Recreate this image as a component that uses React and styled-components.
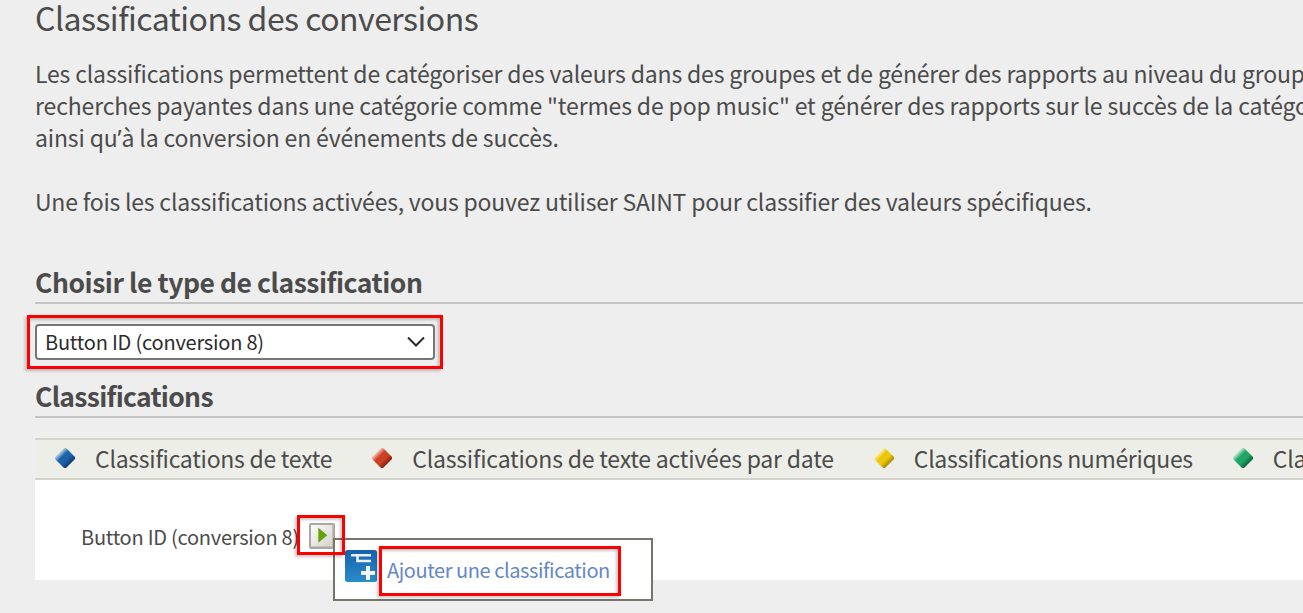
import React from "react";
import styled, { createGlobalStyle } from "styled-components";

const GlobalStyle = createGlobalStyle`
  * { box-sizing: border-box; }
  body {
    margin: 0;
    background: #eeeeee;
    color: #4b4b4b;
    font-family: "Noto Sans CJK SC", "Noto Sans", sans-serif;
    overflow: hidden;
  }
`;

const Page = styled.main`
  width: 1303px;
  height: 613px;
  padding-left: 35px;
  overflow: hidden;
  white-space: nowrap;
`;

const Title = styled.h1`
  margin: 0;
  font-size: 32px;
  font-weight: 400;
  line-height: 35px;
  letter-spacing: -0.52px;
`;

const Intro = styled.div`
  margin-top: 22px;
  font-size: 23px;
  line-height: 32px;
`;

const Line = styled.div`
  height: 32px;
  letter-spacing: ${(p) => p.$spacing || 0}px;
`;

const Apostrophe = styled.span`
  font-family: "Noto Sans", sans-serif;
`;

const SectionTitle = styled.h2`
  margin: ${(p) => p.$top}px 0 0;
  height: 40px;
  border-bottom: 2px solid #c4c4c4;
  font-size: 26.5px;
  font-weight: 700;
  line-height: 35px;
  letter-spacing: ${(p) => p.$spacing || 0}px;
`;

const Highlight = styled.span`
  position: absolute;
  inset: ${(p) => p.$inset};
  border: 3px solid #ff0000;
  box-shadow: -2px 2px 3px rgba(0, 0, 0, 0.22), inset -2px 2px 3px rgba(0, 0, 0, 0.22);
  pointer-events: none;
  z-index: 2;
`;

const Select = styled.div`
  position: relative;
  display: flex;
  align-items: center;
  justify-content: space-between;
  width: 400px;
  height: 36px;
  margin-top: 20px;
  padding: 0 8px;
  border: 2px solid #767676;
  border-radius: 4px;
  background: #fff;
  color: #2c2c2c;
  font-size: 20px;
  line-height: 32px;
  letter-spacing: -0.21px;
`;

const Legend = styled.div`
  display: flex;
  align-items: center;
  gap: 40px;
  height: 42px;
  margin-top: 20px;
  padding-left: 20px;
  border-top: 2px solid #d3d4cd;
  border-bottom: 2px solid #d3d4cd;
  background: #eeeee8;
`;

const LegendItem = styled.div`
  display: flex;
  flex: none;
  align-items: center;
  gap: 20px;
  height: 38px;
  padding-bottom: 2px;
  font-size: 23px;
  line-height: 36px;
  letter-spacing: ${(p) => p.$spacing || 0}px;
`;

const Panel = styled.div`
  display: flex;
  align-items: flex-start;
  height: 100px;
  padding: 43px 0 0 46px;
  background: #fff;
`;

const RowLabel = styled.span`
  width: 228px;
  font-size: 20px;
  line-height: 28px;
  letter-spacing: -0.25px;
`;

const ArrowButton = styled.div`
  position: relative;
  width: 26px;
  height: 26px;

  svg { display: block; }
`;

const Menu = styled.div`
  position: absolute;
  left: 24px;
  top: 15px;
  display: flex;
  align-items: flex-start;
  width: 320px;
  height: 63px;
  padding: 10px;
  border: 2px solid #74756d;
  background: #fff;
`;

const MenuLink = styled.span`
  position: relative;
  margin-left: 10px;
  color: #6487c5;
  font-size: 20px;
  line-height: 40px;
  letter-spacing: -0.43px;
`;

const palettes = {
  blue: ["#c3d6ea", "#1c63a8", "#0c3b72"],
  red: ["#f7c9be", "#cc4024", "#8a2010"],
  yellow: ["#fbf3c8", "#ebc70d", "#a88905"],
  green: ["#c2e8d4", "#1fa565", "#0c653a"],
};

function Diamond({ tone }) {
  const [light, base, dark] = palettes[tone];
  return (
    <svg width="20" height="20" viewBox="0 0 20 20">
      <defs>
        <linearGradient id={`shade-${tone}`} gradientUnits="userSpaceOnUse" x1="4.5" y1="4.5" x2="15.5" y2="15.5">
          <stop offset="0" stopColor={light} />
          <stop offset=".32" stopColor={base} />
          <stop offset=".65" stopColor={base} />
          <stop offset="1" stopColor={dark} />
        </linearGradient>
      </defs>
      <path d="M9 0H11L20 9V11L11 20H9L0 11V9Z" fill={`url(#shade-${tone})`} />
    </svg>
  );
}

function Chevron() {
  return (
    <svg width="18" height="12" viewBox="0 0 18 12" fill="none" stroke="#2c2c2c" strokeWidth="2">
      <path d="M1 1.5 9 9.5 17 1.5" />
    </svg>
  );
}

function PlayIcon() {
  return (
    <svg width="26" height="26" viewBox="0 0 26 26">
      <defs>
        <linearGradient id="face" x1="0" y1="0" x2="1" y2="1">
          <stop offset="0" stopColor="#fbfbfa" />
          <stop offset="1" stopColor="#d6d2cc" />
        </linearGradient>
      </defs>
      <rect width="26" height="26" rx="2" fill="#aaa6a0" />
      <rect x="2" y="2" width="21.5" height="21.5" fill="url(#face)" />
      <path d="M9.3 4.7 18.3 12.3 9.3 19.8Z" fill="#61a206" />
    </svg>
  );
}

function AddClassificationIcon() {
  return (
    <svg width="32" height="32" viewBox="0 0 32 32">
      <defs>
        <linearGradient id="tile" x1="0" y1="0" x2="0" y2="1">
          <stop offset="0" stopColor="#1560ad" />
          <stop offset="1" stopColor="#2a8dc9" />
        </linearGradient>
      </defs>
      <rect width="32" height="32" rx="2.5" fill="url(#tile)" />
      <path d="M6 5.2H26M12.5 5.2V11H26" fill="none" stroke="#e9f2fa" strokeWidth="2.6" />
      <path d="M23 16V30M16 23H30" stroke="#f4f9fd" strokeWidth="4" />
    </svg>
  );
}

export default function App() {
  return (
    <Page>
      <GlobalStyle />
      <Title>Classifications des conversions</Title>
      <Intro>
        <Line $spacing={-0.165}>Les classifications permettent de catégoriser des valeurs dans des groupes et de générer des rapports au niveau du groupe.</Line>
        <Line $spacing={-0.14}>recherches payantes dans une catégorie comme "termes de pop music" et générer des rapports sur le succès de la catégorie</Line>
        <Line $spacing={-0.15}>ainsi qu<Apostrophe>’</Apostrophe>à la conversion en événements de succès.</Line>
        <Line />
        <Line $spacing={-0.21}>Une fois les classifications activées, vous pouvez utiliser SAINT pour classifier des valeurs spécifiques.</Line>
      </Intro>
      <SectionTitle $top={47} $spacing={-0.46}>Choisir le type de classification</SectionTitle>
      <Select>
        <span>Button ID (conversion 8)</span>
        <Chevron />
        <Highlight $inset="-11px -10px -11px -10px" />
      </Select>
      <SectionTitle $top={18} $spacing={-0.7}>Classifications</SectionTitle>
      <Legend>
        <LegendItem $spacing={-0.27}><Diamond tone="blue" /><span>Classifications de texte</span></LegendItem>
        <LegendItem $spacing={-0.21}><Diamond tone="red" /><span>Classifications de texte activées par date</span></LegendItem>
        <LegendItem $spacing={-0.34}><Diamond tone="yellow" /><span>Classifications numériques</span></LegendItem>
        <LegendItem $spacing={-0.3}><Diamond tone="green" /><span>Classifications</span></LegendItem>
      </Legend>
      <Panel>
        <RowLabel>Button ID (conversion 8)</RowLabel>
        <ArrowButton>
          <PlayIcon />
          <Menu>
            <AddClassificationIcon />
            <MenuLink>
              Ajouter une classification
              <Highlight $inset="-4px -11px -6px -8px" />
            </MenuLink>
          </Menu>
          <Highlight $inset="-8px -10px -6px -12px" />
        </ArrowButton>
      </Panel>
    </Page>
  );
}
